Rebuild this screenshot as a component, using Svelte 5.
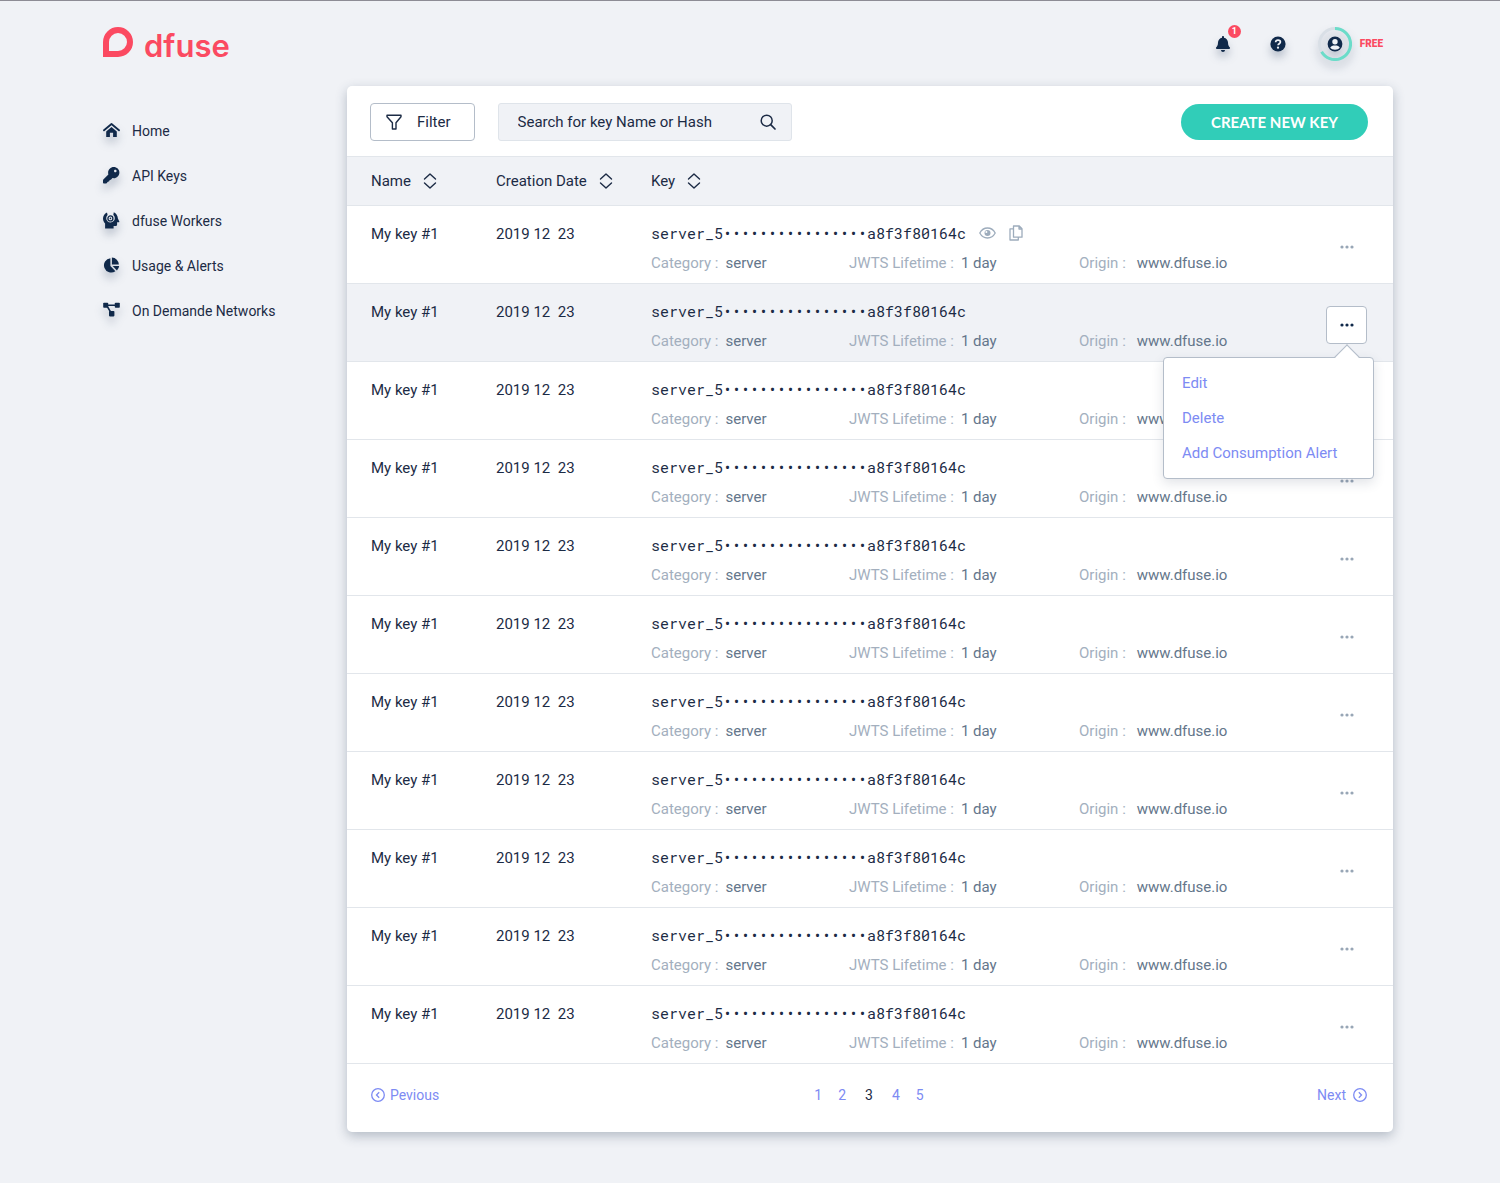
<script>
  const navItems = [
    { label: 'Home', icon: 'home' },
    { label: 'API Keys', icon: 'key' },
    { label: 'dfuse Workers', icon: 'worker' },
    { label: 'Usage & Alerts', icon: 'pie' },
    { label: 'On Demande Networks', icon: 'network' }
  ];
  const columns = ['Name', 'Creation Date', 'Key'];
  const menuItems = ['Edit', 'Delete', 'Add Consumption Alert'];
  const pages = [1, 2, 3, 4, 5];
  const currentPage = 3;

  const rows = Array.from({ length: 11 }, (_, id) => ({
    id,
    name: 'My key #1',
    date: '2019 12\u00a0 23',
    key: 'server_5' + '•'.repeat(16) + 'a8f3f80164c',
    category: 'server',
    lifetime: '1 day',
    origin: 'www.dfuse.io'
  }));

  let openRow = $state(1);
  let query = $state('');
</script>

<div class="page">
  <header class="topbar">
    <a class="brand" href="#home" aria-label="dfuse">
      <svg class="mark" viewBox="0 0 30 30" aria-hidden="true">
        <path d="M3 27V15A12 12 0 1 1 15 27Z" fill="none" stroke="currentColor" stroke-width="6" />
      </svg>
      <span class="wordmark">dfuse</span>
    </a>
    <div class="account">
      <button class="icon-button bell" aria-label="Notifications">
        <svg viewBox="0 0 448 512" width="14" height="16" aria-hidden="true">
          <path fill="currentColor" d="M224 512c35.32 0 63.97-28.65 63.97-64H160.03c0 35.35 28.65 64 63.97 64zm215.39-149.71c-19.32-20.76-55.47-51.99-55.47-154.29 0-77.7-54.48-139.9-127.94-155.16V32c0-17.67-14.32-32-31.98-32s-31.98 14.33-31.98 32v20.84C118.56 68.1 64.08 130.3 64.08 208c0 102.3-36.15 133.53-55.47 154.29-6 6.45-8.66 14.16-8.61 21.71.11 16.4 12.98 32 32.1 32h383.8c19.12 0 32-15.6 32.1-32 .05-7.55-2.61-15.27-8.61-21.71z" />
        </svg>
        <span class="badge">1</span>
      </button>
      <button class="icon-button help" aria-label="Help">
        <svg viewBox="0 0 16 16" width="16" height="16" aria-hidden="true">
          <circle cx="8" cy="8" r="7.6" fill="currentColor" />
          <path d="M5.6 6.3C5.7 4.9 6.7 4.1 8 4.1s2.4.8 2.4 2c0 1.600-2.300 1.700-2.300 3.200" fill="none" stroke="#f0f2f6" stroke-width="1.700" />
          <circle cx="8" cy="11.700" r="1.100" fill="#f0f2f6" />
        </svg>
      </button>
      <button class="icon-button profile">
        <svg viewBox="0 0 34 34" width="34" height="34" aria-hidden="true">
          <circle cx="17" cy="17" r="15.500" fill="none" stroke="#d9dfe6" stroke-width="3" />
          <path d="M17 1.500A15.500 15.500 0 1 1 3.600 24.700" fill="none" stroke="#6bdcc9" stroke-width="3" />
          <circle cx="17" cy="17" r="7.400" fill="currentColor" />
          <circle cx="17" cy="14.700" r="2.700" fill="#f0f2f6" />
          <path d="M12.200 20.800c.8-1.900 2.300-2.300 4.800-2.300s4 .4 4.800 2.300c-1 1.200-2.700 2-4.800 2s-3.800-.8-4.800-2z" fill="#f0f2f6" />
        </svg>
        <span class="plan">FREE</span>
      </button>
    </div>
  </header>

  <div class="body">
    <nav class="sidebar">
      {#each navItems as item}
        <a class="nav-link" href="#{item.icon}">
          <svg class="nav-icon" viewBox="0 0 17 17" aria-hidden="true">
            {#if item.icon === 'home'}
              <path d="M1 8.300 8.500 2l7.500 6.300" fill="none" stroke="currentColor" stroke-width="1.800" stroke-linecap="round" stroke-linejoin="round" />
              <path d="M3.200 9.400 8.500 4.900l5.300 4.500V15h-3.700v-4.200H6.900V15H3.200z" fill="currentColor" />
            {:else if item.icon === 'key'}
              <path transform="scale(.032)" fill="currentColor" fill-rule="evenodd" d="M512 170C512 270 433 350 336 350c-14 0-28-2-40-5l-50 50-36 12-18 40-50 20-20 36c-4 8-14 12-24 12H34c-18 0-34-14-34-34v-60c0-10 4-20 10-27l158-158C163 214 160 195 160 176 160 79 239 0 336 0c97 0 176 75 176 170zM344 124c0 24 18 42 40 42s40-18 40-42-18-40-40-40-40 16-40 40z" />
            {:else if item.icon === 'worker'}
              <path d="M4 .4C1.500 1.600 0 3.800 0 6.500c0 2.200.9 3.800 2.100 5V16.600h8.500v-2.500h2c1 0 1.500-.6 1.500-1.500v-2.300h1.700c.5 0 .7-.5.5-.9L14.900 6.500C14.800 3.600 13.200 1.300 10.800.2L10.300 2.900a4.300 4.300 0 1 1-5.700.1z" fill="currentColor" />
              <circle cx="7.400" cy="6.400" r="2.500" fill="none" stroke="currentColor" stroke-width="1.300" />
              <circle cx="7.400" cy="6.400" r=".8" fill="currentColor" />
            {:else if item.icon === 'pie'}
              <path d="M7.400 1.200v7.900l5 5.100A7.200 7.200 0 1 1 7.400 1.200z" fill="currentColor" />
              <path d="M8.900.6a7.300 7.300 0 0 1 7 7H8.900z" fill="currentColor" />
              <path d="M9.700 9h6.500a7.500 7.500 0 0 1-2.300 4.400z" fill="currentColor" />
            {:else}
              <path d="M3 3.300h11M4 4l4.500 7.500" fill="none" stroke="currentColor" stroke-width="1.500" />
              <rect x=".2" y=".8" width="5" height="5" rx=".8" fill="currentColor" />
              <rect x="11.800" y=".8" width="5" height="5" rx=".8" fill="currentColor" />
              <rect x="6" y="9" width="5.400" height="5.400" rx=".8" fill="currentColor" />
            {/if}
          </svg>
          <span>{item.label}</span>
        </a>
      {/each}
    </nav>

    <main class="card">
      <div class="toolbar">
        <button class="filter">
          <svg viewBox="0 0 16 16" width="16" height="16" aria-hidden="true">
            <path d="M1 1.300h14v1.400L10 8.800V15H6.400V8.800L1 2.700z" fill="none" stroke="currentColor" stroke-width="1.400" stroke-linejoin="round" />
          </svg>
          Filter
        </button>
        <form class="search" role="search" onsubmit={(e) => e.preventDefault()}>
          <input type="text" aria-label="Search for key Name or Hash" placeholder="Search for key Name or Hash" bind:value={query} />
          <button class="plain" aria-label="Search">
            <svg viewBox="0 0 16 16" width="16" height="16" aria-hidden="true">
              <circle cx="6.700" cy="6.700" r="5.500" fill="none" stroke="currentColor" stroke-width="1.500" />
              <path d="M10.700 10.700 15 15" stroke="currentColor" stroke-width="1.700" stroke-linecap="round" />
            </svg>
          </button>
        </form>
        <button class="create">CREATE NEW KEY</button>
      </div>

      <table>
        <thead>
          <tr>
            {#each columns as column}
              <th scope="col">
                <button class="plain sort">
                  {column}
                  <svg viewBox="0 0 14 16" width="14" height="16" aria-hidden="true">
                    <path d="M1.500 6 7 1l5.500 5M1.500 10 7 15l5.500-5" fill="none" stroke="currentColor" stroke-width="1.400" stroke-linecap="round" stroke-linejoin="round" />
                  </svg>
                </button>
              </th>
            {/each}
            <th class="actions-head" aria-label="Actions"></th>
          </tr>
        </thead>
        <tbody>
          {#each rows as row (row.id)}
            <tr class:active={row.id === openRow}>
              <td>{row.name}</td>
              <td>{row.date}</td>
              <td>
                <div class="key-line">
                  <code>{row.key}</code>
                  {#if row.id === 0}
                    <button class="plain muted" aria-label="Reveal key">
                      <svg viewBox="0 0 17 12" width="17" height="12" aria-hidden="true">
                        <path d="M.8 6C2.500 2.800 5.200 1 8.500 1s6 1.800 7.700 5c-1.700 3.200-4.400 5-7.700 5S2.500 9.200.8 6z" fill="none" stroke="currentColor" stroke-width="1.300" />
                        <circle cx="8.500" cy="6" r="3" fill="currentColor" />
                        <circle cx="7.400" cy="5" r="1" fill="#fff" />
                      </svg>
                    </button>
                    <button class="plain muted" aria-label="Copy key">
                      <svg viewBox="0 0 14 16" width="14" height="16" aria-hidden="true">
                        <path d="M4.500 1h5.800L13 3.700v8.500H4.500zM10 1v3h3M4.500 3.800H1V15h8.300v-2.800" fill="none" stroke="currentColor" stroke-width="1.300" stroke-linejoin="round" />
                      </svg>
                    </button>
                  {/if}
                </div>
                <dl class="details">
                  <div><dt>Category :</dt><dd>{row.category}</dd></div>
                  <div><dt>JWTS Lifetime :</dt><dd>{row.lifetime}</dd></div>
                  <div class="origin"><dt>Origin :</dt><dd>{row.origin}</dd></div>
                </dl>
              </td>
              <td class="actions">
                <div class="anchor">
                  <button class="more" aria-label="More actions" aria-expanded={row.id === openRow} onclick={() => (openRow = openRow === row.id ? -1 : row.id)}>
                    <svg viewBox="0 0 14 4" width="14" height="4" aria-hidden="true">
                      <circle cx="2" cy="2" r="1.600" /><circle cx="7" cy="2" r="1.600" /><circle cx="12" cy="2" r="1.600" />
                    </svg>
                  </button>
                  {#if row.id === openRow}
                    <div class="menu">
                      {#each menuItems as entry}
                        <button class="plain menu-item">{entry}</button>
                      {/each}
                    </div>
                  {/if}
                </div>
              </td>
            </tr>
          {/each}
        </tbody>
      </table>

      <nav class="pagination" aria-label="Pagination">
        <a class="step" href="#previous">
          <svg viewBox="0 0 14 14" width="14" height="14" aria-hidden="true">
            <circle cx="7" cy="7" r="6.300" /><path d="M8.200 4.300 5.500 7l2.700 2.700" />
          </svg>
          Pevious
        </a>
        <div class="pages">
          {#each pages as page}
            <a href="#page-{page}" class:current={page === currentPage} aria-current={page === currentPage ? 'page' : undefined}>{page}</a>
          {/each}
        </div>
        <a class="step next" href="#next">
          Next
          <svg viewBox="0 0 14 14" width="14" height="14" aria-hidden="true">
            <circle cx="7" cy="7" r="6.300" /><path d="M5.800 4.300 8.500 7 5.800 9.700" />
          </svg>
        </a>
      </nav>
    </main>
  </div>
</div>

<style>
  :global(body) {
    background: #f0f2f6;
  }

  .page {
    --ink: #1c2b45;
    --link: #7d8bf3;
    --line: #e2e6eb;
    --soft: #f0f2f6;
    box-sizing: border-box;
    min-height: 100vh;
    padding: 0 107px 48px 103px;
    border-top: 1px solid #8d8c95;
    background: var(--soft);
    color: var(--ink);
    font: 15px/24px Roboto, sans-serif;
  }

  .page *,
  .page *::before {
    box-sizing: border-box;
  }

  a {
    color: inherit;
    text-decoration: none;
  }

  button,
  input {
    font: inherit;
    color: inherit;
  }

  button {
    cursor: pointer;
  }

  .plain,
  .icon-button {
    display: flex;
    align-items: center;
    padding: 0;
    border: 0;
    background: none;
  }

  .topbar {
    display: flex;
    align-items: center;
    justify-content: space-between;
    height: 85px;
  }

  .brand {
    display: flex;
    align-items: center;
    gap: 11px;
    color: #fb4a61;
  }

  .mark {
    width: 30px;
    height: 30px;
    margin-bottom: 4px;
  }

  .wordmark {
    padding-top: 4px;
    font: 600 31px/36px Inter, sans-serif;
  }

  .account {
    display: flex;
    align-items: center;
    margin-right: 10px;
    color: #10294a;
  }

  .icon-button svg {
    filter: drop-shadow(0 6px 4px rgba(16, 41, 74, 0.25));
  }

  .bell {
    position: relative;
  }

  .badge {
    position: absolute;
    top: -11px;
    right: -11px;
    width: 13px;
    height: 13px;
    border-radius: 50%;
    background: #fb4a61;
    color: #fff;
    font: 700 9px/13px Roboto, sans-serif;
    text-align: center;
  }

  .help {
    margin-left: 40px;
  }

  .profile {
    gap: 8px;
    margin-left: 32px;
  }

  .plan {
    color: #fb4a61;
    font: 900 10px/12px Roboto, sans-serif;
  }

  .body {
    display: grid;
    grid-template-columns: 244px minmax(0, 1fr);
  }

  .sidebar {
    padding-top: 22px;
    font-size: 14px;
  }

  .nav-link {
    display: flex;
    align-items: center;
    gap: 12px;
    height: 45px;
  }

  .nav-icon {
    width: 17px;
    height: 17px;
    color: #10294a;
    filter: drop-shadow(0 6px 4px rgba(16, 41, 74, 0.25));
  }

  .card {
    border-radius: 5px;
    background: #fff;
    box-shadow: 0 4px 12px rgba(40, 60, 85, 0.3);
  }

  .toolbar {
    display: flex;
    align-items: center;
    padding: 17px 25px 15px 23px;
  }

  .filter {
    display: flex;
    align-items: center;
    gap: 15px;
    height: 38px;
    padding: 0 23px 0 15px;
    border: 1px solid #b4bdc9;
    border-radius: 4px;
    background: #fff;
  }

  .search {
    display: flex;
    align-items: center;
    width: 294px;
    height: 38px;
    margin-left: 23px;
    padding: 0 15px 0 19px;
    border: 1px solid #dfe4ea;
    border-radius: 3px;
    background: var(--soft);
  }

  .search input {
    flex: 1;
    min-width: 0;
    padding: 0;
    border: 0;
    outline: 0;
    background: none;
  }

  .search input::placeholder {
    color: var(--ink);
    opacity: 1;
  }

  .create {
    height: 36px;
    margin-left: auto;
    padding: 0 30px;
    border: 0;
    border-radius: 18px;
    background: #31cdb8;
    color: #fff;
    font: 700 15px/24px Lato, sans-serif;
  }

  table {
    width: 100%;
    table-layout: fixed;
    border-collapse: separate;
    border-spacing: 0;
  }

  th {
    height: 50px;
    padding: 0;
    border: solid var(--line);
    border-width: 1px 0;
    background: var(--soft);
    font-weight: 400;
    text-align: left;
  }

  th:nth-child(1) {
    width: 149px;
  }

  th:nth-child(2) {
    width: 155px;
  }

  th:first-child,
  td:first-child {
    padding-left: 24px;
  }

  .actions-head {
    width: 67px;
  }

  .sort {
    gap: 12px;
  }

  td {
    height: 78px;
    padding: 16px 0 8px;
    border-bottom: 1px solid var(--line);
    vertical-align: top;
  }

  .active td {
    background: var(--soft);
  }

  .key-line {
    display: flex;
    align-items: center;
    gap: 13px;
    height: 22px;
  }

  code {
    font: 15px/24px 'Roboto Mono', 'DejaVu Sans Mono', monospace;
  }

  .muted {
    color: #9dacbc;
  }

  .details {
    display: grid;
    grid-template-columns: 198px 230px auto;
    margin: 7px 0 0;
  }

  .details div {
    display: flex;
    gap: 7px;
  }

  .details .origin {
    gap: 11px;
  }

  dt {
    color: #a3afbe;
  }

  dd {
    margin: 0;
    color: #64768b;
  }

  .actions {
    padding: 22px 26px 0 0;
  }

  .anchor {
    position: relative;
  }

  .more {
    display: flex;
    align-items: center;
    justify-content: center;
    width: 41px;
    height: 38px;
    padding: 0;
    border: 1px solid transparent;
    border-radius: 4px;
    background: none;
    fill: #98a6b6;
  }

  .active .more {
    border-color: #b4bdc9;
    background: #fff;
    fill: #10294a;
  }

  .menu {
    position: absolute;
    z-index: 1;
    top: 51px;
    right: -7px;
    width: 211px;
    padding: 7px 18px 8px;
    border: 1px solid #b4bdc9;
    border-radius: 4px;
    background: #fff;
    box-shadow: 0 4px 12px rgba(40, 60, 85, 0.14);
  }

  .menu::before {
    content: '';
    position: absolute;
    top: -10px;
    right: 17px;
    width: 18px;
    height: 18px;
    border: solid #b4bdc9;
    border-width: 1px 0 0 1px;
    background: linear-gradient(135deg, #fff 50%, transparent 50%);
    transform: rotate(45deg);
  }

  .menu-item {
    height: 35px;
    color: var(--link);
    white-space: nowrap;
  }

  .pagination {
    display: grid;
    grid-template-columns: 1fr auto 1fr;
    padding: 19px 26px 25px 24px;
    color: var(--link);
    font-size: 14px;
  }

  .step {
    display: flex;
    align-items: center;
    gap: 5px;
  }

  .step svg {
    fill: none;
    stroke: currentColor;
    stroke-width: 1.3;
  }

  .next {
    justify-self: end;
    gap: 7px;
  }

  .pages {
    display: flex;
    gap: 16px;
  }

  .current {
    margin: 0 3px;
    color: var(--ink);
  }
</style>
